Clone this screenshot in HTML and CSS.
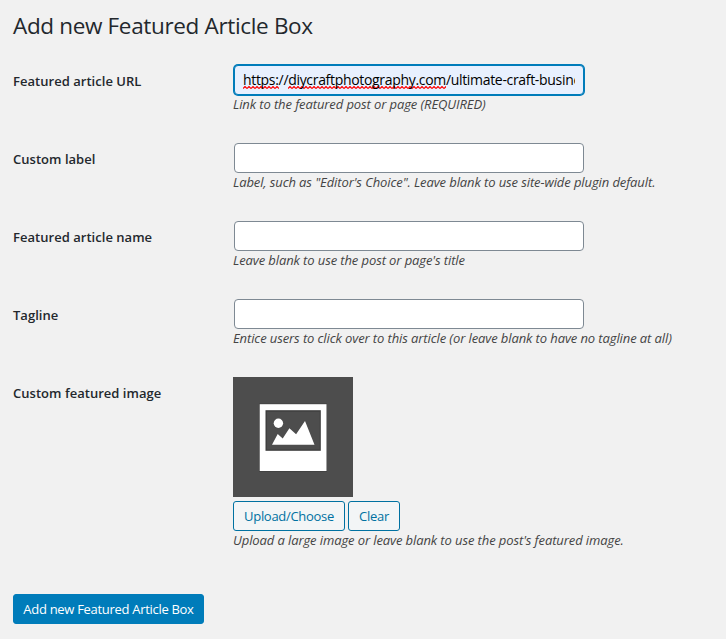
FILE: index.html
```html
<!DOCTYPE html>
<html lang="en">
<head>
<meta charset="utf-8">
<title>Add new Featured Article Box</title>
<link rel="stylesheet" href="styles.css">
</head>
<body>
<h1 class="title">Add new Featured Article Box</h1>
<form class="form">
  <div class="row">
    <label class="label">Featured article URL</label>
    <div class="field">
      <div class="input focused" role="textbox"><div class="value"><span class="misspelled">https:</span>//<span class="misspelled">diycraftphotography.com</span>/ultimate-craft-busine</div></div>
      <p class="hint">Link to the featured post or page (REQUIRED)</p>
    </div>
  </div>
  <div class="row">
    <label class="label">Custom label</label>
    <div class="field">
      <div class="input" role="textbox"></div>
      <p class="hint">Label, such as "Editor's Choice". Leave blank to use site-wide plugin default.</p>
    </div>
  </div>
  <div class="row">
    <label class="label">Featured article name</label>
    <div class="field">
      <div class="input" role="textbox"></div>
      <p class="hint">Leave blank to use the post or page's title</p>
    </div>
  </div>
  <div class="row">
    <label class="label">Tagline</label>
    <div class="field">
      <div class="input" role="textbox"></div>
      <p class="hint">Entice users to click over to this article (or leave blank to have no tagline at all)</p>
    </div>
  </div>
  <div class="row image-row">
    <label class="label">Custom featured image</label>
    <div class="field">
      <svg class="preview" viewBox="0 0 120 120" width="120" height="120">
        <rect width="120" height="120" fill="#4d4d4d"/>
        <rect x="26" y="26.5" width="68" height="68.3" fill="#404040"/>
        <rect x="26.7" y="27.2" width="66.8" height="66.8" fill="#fff"/>
        <rect x="32.5" y="33.2" width="55.3" height="40.6" fill="#3c3c3c"/>
        <rect x="33.8" y="34.6" width="53" height="38" fill="#4d4d4d"/>
        <circle cx="45.4" cy="46.3" r="4.7" fill="#fff"/>
        <path d="M39 67.8 44.7 56.9 49.7 61.4 56.4 51.2 63.1 57.3 72 44 81.5 67.8Z" fill="#fff"/>
      </svg>
      <div class="buttons">
        <button type="button" class="button upload">Upload/Choose</button>
        <button type="button" class="button clear">Clear</button>
      </div>
      <p class="hint">Upload a large image or leave blank to use the post's featured image.</p>
    </div>
  </div>
  <button type="button" class="button primary">Add new Featured Article Box</button>
</form>
</body>
</html>
```
FILE: styles.css
```css
* { box-sizing: border-box; }
body {
  margin: 0;
  padding: 12px 13px 0;
  background: #f1f1f1;
  color: #23282d;
  font: 13px/20px "Open Sans", "Noto Sans", sans-serif;
}
.title {
  margin: 0;
  font-size: 22.5px;
  font-weight: 400;
  line-height: 28px;
  letter-spacing: -0.34px;
  white-space: nowrap;
}
.form { padding-top: 25px; }
.row { display: flex; height: 78px; }
.label {
  width: 220px;
  padding-top: 6px;
  font-size: 13px;
  font-weight: 600;
  letter-spacing: 0.03px;
}
.field { width: 460px; }
.input {
  width: 350px;
  height: 30px;
  margin-left: 1px;
  border: 1px solid #7e8993;
  border-radius: 4px;
  background: #fff;
}
.focused {
  padding: 0 8px;
  border-color: #007cba;
  box-shadow: 0 0 0 1px #007cba;
  background: #e8f0fe;
  color: #000;
}
.value {
  height: 28px;
  overflow: hidden;
  white-space: nowrap;
  font-size: 14px;
  line-height: 28px;
  letter-spacing: -0.32px;
}
.misspelled {
  background: url("data:image/svg+xml,%3Csvg xmlns='http://www.w3.org/2000/svg' width='4' height='3'%3E%3Cpath d='M0 2.5 2 .5 4 2.5' fill='none' stroke='%23f00' stroke-width='1.2'/%3E%3C/svg%3E") repeat-x left bottom;
}
.hint {
  margin: -1px 0 0;
  color: #444;
  font-size: 13px;
  font-style: italic;
  line-height: 20px;
  letter-spacing: -0.1px;
  white-space: nowrap;
}
.image-row { height: 217px; }
.preview { display: block; }
.buttons { display: flex; gap: 3px; margin-top: 4px; }
.button {
  height: 30px;
  padding: 0;
  border: 1px solid #0071a1;
  border-radius: 3px;
  background: #f3f5f6;
  color: #0071a1;
  font: 13px/28px "Open Sans", "Noto Sans", sans-serif;
  letter-spacing: -0.3px;
  white-space: nowrap;
}
.upload { width: 112px; }
.clear { width: 52px; }
.primary {
  display: block;
  width: 191px;
  border-color: #007cba;
  background: #007cba;
  color: #fff;
}
```
